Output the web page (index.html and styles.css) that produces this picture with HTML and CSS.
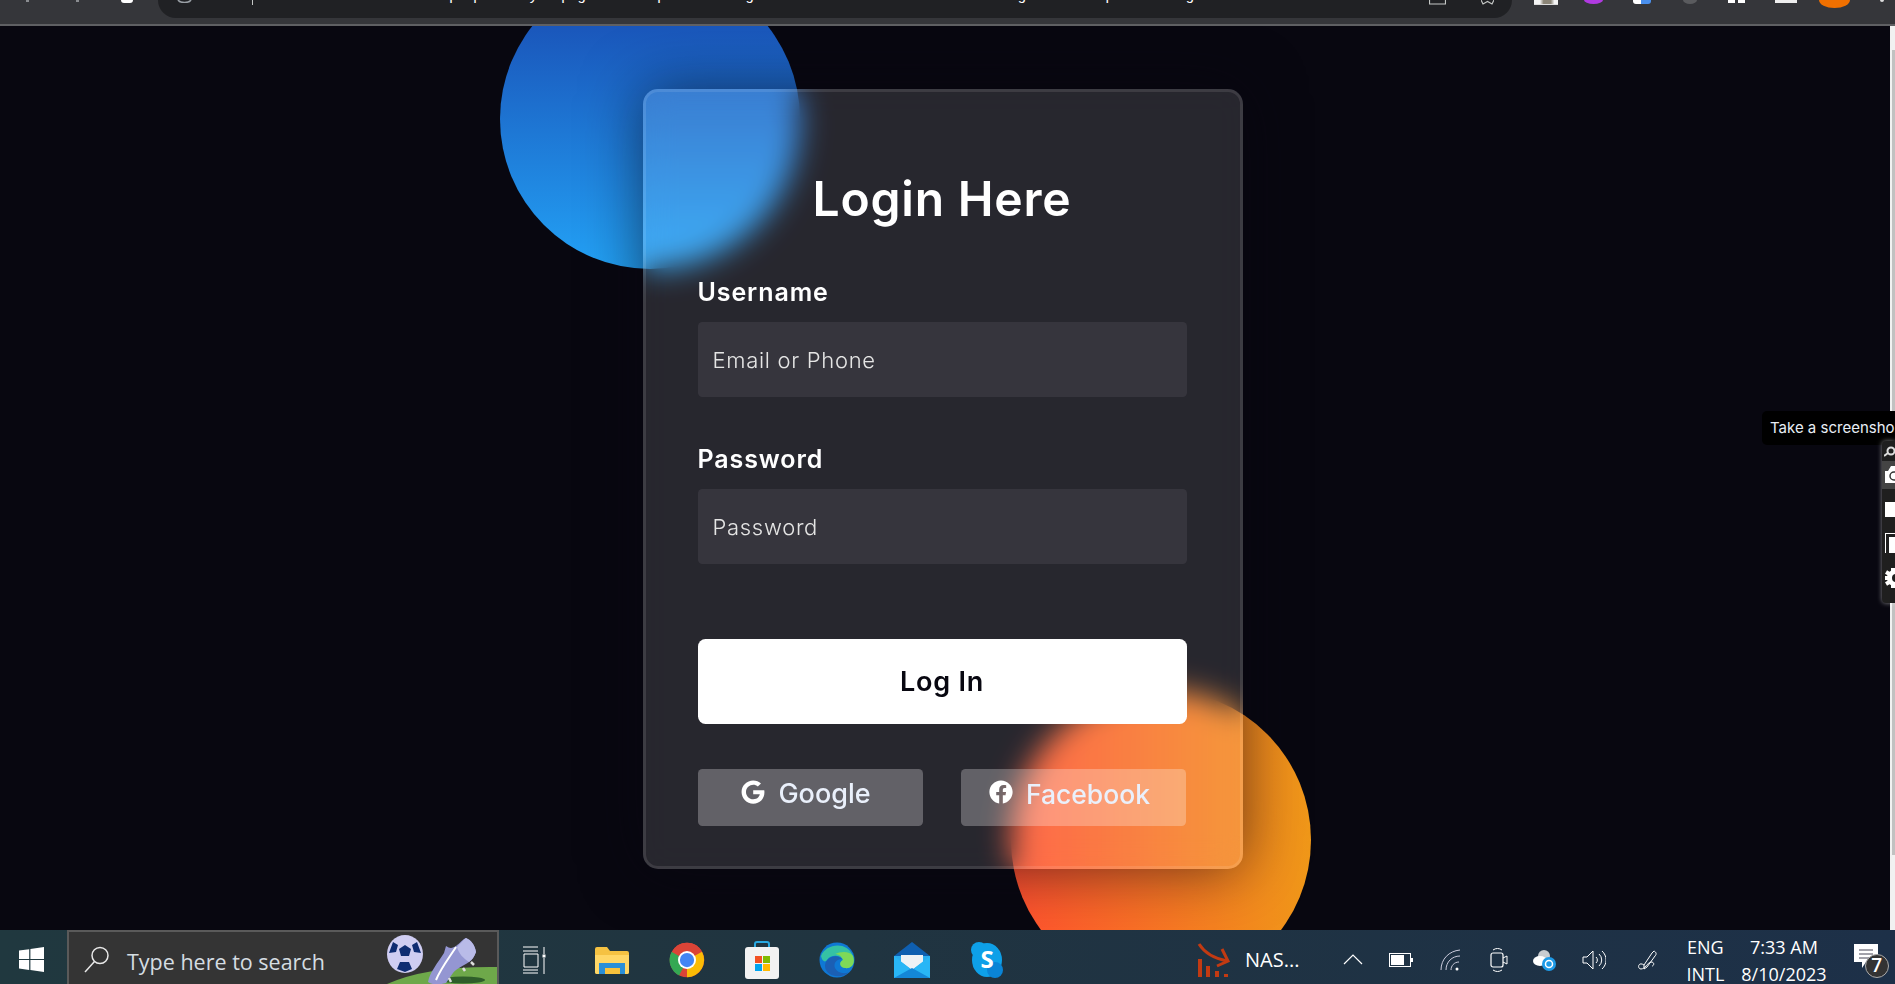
FILE: index.html
```html
<!DOCTYPE html>
<html lang="en">
<head>
<meta charset="utf-8">
<title>Login Here</title>
<link rel="stylesheet" href="styles.css">
</head>
<body>
<header class="chrome">
  <div class="nav-icons">
    <i class="nav-dot"></i>
    <i class="nav-dot"></i>
    <i class="nav-reload"></i>
  </div>
  <div class="omnibox">
    <svg class="omni-info" width="15" height="3" viewBox="0 0 15 3"><path d="M1 0a7 4 0 0 0 13 0" fill="none" stroke="#9aa0a6" stroke-width="1.500"/></svg>
    <span class="omni-sep"></span>
    <span class="url">127.0.0.1:/home/onDesktop/uploadsby/Inpage%20form-panel-%20login%20and%20the%20blurred%20forms/glass-form-panel%20login.html</span>
    <svg class="omni-share" width="17" height="5" viewBox="0 0 17 5"><path d="M.5 0v4h16V0" fill="none" stroke="#c4c7c5" stroke-width="1.200"/></svg>
    <svg class="omni-star" width="13" height="5" viewBox="0 0 13 5"><path d="M0 0 2 4 6.500 1.500 11 4 13 0" fill="none" stroke="#c4c7c5" stroke-width="1.200"/></svg>
  </div>
  <div class="ext-icons">
    <i class="ext ext-white"></i>
    <i class="ext ext-purple"></i>
    <i class="ext ext-blue"></i>
    <i class="ext ext-grey"></i>
    <i class="ext ext-puzzle"></i>
    <i class="ext ext-bar"></i>
    <i class="ext ext-avatar"></i>
    <i class="ext ext-dots"></i>
  </div>
</header>

<main class="stage">
  <div class="orb orb-blue"></div>
  <div class="orb orb-orange"></div>
  <form class="login">
    <h3 class="login-title">Login Here</h3>
    <label class="field-label" for="username">Username</label>
    <input class="field" id="username" type="text" placeholder="Email or Phone">
    <label class="field-label" for="password">Password</label>
    <input class="field" id="password" type="password" placeholder="Password">
    <button class="submit" type="button">Log In</button>
    <div class="social">
      <div class="social-btn">
        <svg class="social-icon" viewBox="0 0 488 512"><path fill="#fff" d="M488 261.8C488 403.3 391.1 504 248 504 110.8 504 0 393.2 0 256S110.8 8 248 8c66.8 0 123 24.5 166.3 64.9l-67.5 64.9C258.5 52.6 94.3 116.6 94.3 256c0 86.5 69.1 156.6 153.7 156.6 98.2 0 135-70.4 140.8-106.9H248v-85.3h236.1c2.3 12.7 3.9 24.9 3.9 41.4z"/></svg>
        <span>Google</span>
      </div>
      <div class="social-btn">
        <svg class="social-icon" viewBox="0 0 512 512"><path fill="#fff" d="M504 256C504 119 393 8 256 8S8 119 8 256c0 123.78 90.69 226.38 209.25 245V327.69h-63V256h63v-54.64c0-62.15 37-96.48 93.67-96.48 27.14 0 55.52 4.84 55.52 4.84v61h-31.28c-30.8 0-40.41 19.12-40.41 38.73V256h68.78l-11 71.69h-57.78V501C413.31 482.38 504 379.78 504 256z"/></svg>
        <span class="social-fb">Facebook</span>
      </div>
    </div>
  </form>

  <div class="scrollbar"><div class="scroll-thumb"></div></div>
  <div class="shot-tip">Take a screensho</div>
  <div class="shot-bar">
    <svg class="shot-mini" width="12" height="11" viewBox="0 0 12 11"><circle cx="7" cy="5" r="3.500" fill="none" stroke="#ddd" stroke-width="2"/><path d="M0 10 4 7" stroke="#ddd" stroke-width="2"/></svg>
    <div class="shot-item shot-active"><svg width="10" height="17" viewBox="0 0 10 17"><path d="M0 5h3l3-5h4v17H0z" fill="#fff"/><circle cx="9" cy="10" r="4" fill="none" stroke="#333" stroke-width="1.500"/></svg></div>
    <div class="shot-item shot-sq"><i class="shot-square"></i></div>
    <div class="shot-item shot-cp"><i class="shot-copy"></i></div>
    <div class="shot-item"><svg width="10" height="20" viewBox="0 0 10 20"><circle cx="11" cy="10" r="6.500" fill="none" stroke="#fff" stroke-width="5"/><path d="M1 4 6 7M0 10h5M1 16l5-3M8 0v4M8 16v4" stroke="#fff" stroke-width="4"/></svg></div>
  </div>
</main>

<footer class="taskbar">
  <div class="start">
    <svg width="25" height="25" viewBox="0 0 25 25"><path fill="#fff" d="M0 3.600 10.200 2.200v9.700H0zM11.400 2 25 0v11.900H11.400zM0 13.100h10.200v9.800L0 21.500zM11.400 13.100H25V25l-13.600-2z"/></svg>
  </div>
  <div class="search">
    <svg class="search-icon" width="26" height="29" viewBox="0 0 26 29"><circle cx="16" cy="10.500" r="8" fill="none" stroke="#e8e8e8" stroke-width="1.500"/><path d="M10.500 16.500 1 27" stroke="#e8e8e8" stroke-width="1.500"/></svg>
    <span class="search-text">Type here to search</span>
    <svg class="search-art" width="110" height="52" viewBox="0 2 110 52">
      <path d="M0 54Q40 36 110 37V54z" fill="#6ea84a"/>
      <ellipse cx="76" cy="50" rx="22" ry="3.500" fill="#2f5e2a"/>
      <ellipse cx="18" cy="24" rx="18" ry="19" fill="#cfcdf2"/>
      <path d="M18 15l6 4-2 7h-8l-2-7zM6 12l5 3-2 7-7 1zM30 12l-5 3 2 7 7 1zM10 39l3-7 9 0 3 7-7 3z" fill="#0e2c72"/>
      <path d="M41 52C43 42 50 34 57 23L59 16C63 19 66 18 69 16 73 13 76 9 79 8 84 10 88 15 89 22 87 27 85 30 82 32 76 36 70 38 66 43L59 53C52 55 45 55 41 52z" fill="#9496d2"/>
      <path d="M70 17C73 14 76 10 79 8 84 10 88 15 89 22 87 27 85 30 82 32 76 28 72 24 70 17z" fill="#b9bbe8"/>
      <path d="M49 50C54 38 62 28 69 17" fill="none" stroke="#fff" stroke-width="2"/>
      <path d="M84 32l3 3M76 38l2 3M62 48l2 4" stroke="#ddd" stroke-width="2.500"/>
    </svg>
  </div>
  <div class="task-apps">
    <span class="app app-view">
      <svg width="24" height="28" viewBox="0 0 24 28"><path d="M0 1h15M0 5h15M1 8h14v13H1zM0 24h15M0 27h15M21 1v7M21 12v16" fill="none" stroke="#fff" stroke-width="1"/><rect x="19.500" y="8.500" width="3" height="3" fill="#fff"/></svg>
    </span>
    <span class="app">
      <svg width="34" height="28" viewBox="0 0 34 28"><path d="M0 3a2 2 0 0 1 2-2h10l3 4h17a2 2 0 0 1 2 2v19a2 2 0 0 1-2 2H2a2 2 0 0 1-2-2z" fill="#f5c242"/><path d="M0 9h34v17a2 2 0 0 1-2 2H2a2 2 0 0 1-2-2z" fill="#ffd766"/><path d="M4 28V17h26v11h-5v-6H10v6z" fill="#2a8fd8"/><rect x="10" y="22" width="15" height="6" fill="#f9c23c"/></svg>
    </span>
    <span class="app">
      <svg width="36" height="36" viewBox="0 0 48 48"><circle cx="24" cy="24" r="23" fill="#db4437"/><path d="M24 24 44 13A23 23 0 0 1 24 47z" fill="#fbbc05"/><path d="M24 24 13.500 44.500A23 23 0 0 1 3.500 13z" fill="#34a853"/><path d="M24 1a23 23 0 0 1 20 12H24a11 11 0 0 0-10 6L4 13A23 23 0 0 1 24 1z" fill="#db4437"/><circle cx="24" cy="24" r="12" fill="#fff"/><circle cx="24" cy="24" r="9.500" fill="#4285f4"/></svg>
    </span>
    <span class="app">
      <svg width="36" height="38" viewBox="0 0 36 38"><path d="M11 10V3a2 2 0 0 1 2-2h10a2 2 0 0 1 2 2v7" fill="none" stroke="#29a8e0" stroke-width="2"/><rect x="1" y="6" width="34" height="32" rx="3" fill="#f2f2f2"/><rect x="11" y="15" width="7" height="7" fill="#f25022"/><rect x="19" y="15" width="7" height="7" fill="#7fba00"/><rect x="11" y="23" width="7" height="7" fill="#00a4ef"/><rect x="19" y="23" width="7" height="7" fill="#ffb900"/></svg>
    </span>
    <span class="app">
      <svg width="36" height="36" viewBox="0 0 36 36"><circle cx="18" cy="18" r="17.500" fill="#0f78d4"/><path d="M2 14C6 2 28-2 34 14c3 9-3 13-8 12C20 25 20 20 24 18 22 13 12 12 8 18 6 21 3 19 2 14z" fill="#35c1a4"/><path d="M6 24C6 15 18 11 23 17c-5 0-9 4-7 9 2 4 8 7 14 4-8 8-24 4-24-6z" fill="#1b5fb4"/><path d="M34 14c3 9-3 13-8 12-6-1-6-6-2-8-1-4-5-6-8-6 6-3 15-3 18 2z" fill="#7ed957"/></svg>
    </span>
    <span class="app">
      <svg width="36" height="36" viewBox="0 0 36 36"><path d="M0 14 18 0l18 14v22H0z" fill="#0f5fb0"/><path d="M0 14h36v22H0z" fill="#2aaef0"/><path d="M7 13h22v7l-11 8-11-8z" fill="#eef2f5"/><path d="M0 14l18 14 18-14v22H0z" fill="#29b6f6"/><path d="M0 36l18-10 18 10z" fill="#1487d8"/></svg>
    </span>
    <span class="app">
      <svg width="34" height="38" viewBox="0 0 34 38"><ellipse cx="17" cy="19" rx="15" ry="17" fill="#0ea0e8"/><circle cx="9" cy="9" r="8" fill="#0ea0e8"/><circle cx="25" cy="29" r="8" fill="#0a84d6"/><text class="skype-s" x="17" y="27">S</text></svg>
    </span>
  </div>
  <div class="stock">
    <svg width="34" height="34" viewBox="0 0 34 34"><path d="M2 1C7 9 15 15 30 18" fill="none" stroke="#c23a12" stroke-width="3"/><path d="M25 6 31 18 20 23" fill="none" stroke="#c23a12" stroke-width="3"/><path d="M3 16v18M11 23v11M20 28v6M29 31v3" stroke="#c23a12" stroke-width="4"/></svg>
    <span class="stock-text">NAS...</span>
  </div>
  <div class="tray">
    <svg class="tray-chev" width="20" height="11" viewBox="0 0 20 11"><path d="M1 10 10 1l9 9" fill="none" stroke="#fff" stroke-width="1.200"/></svg>
    <svg class="tray-batt" width="24" height="14" viewBox="0 0 24 14"><rect x=".5" y=".5" width="21" height="13" fill="none" stroke="#fff"/><rect x="2" y="2" width="13" height="10" fill="#fff"/><rect x="22" y="5" width="2" height="4" fill="#fff"/></svg>
    <svg class="tray-wifi" width="22" height="22" viewBox="0 0 22 22"><path d="M1 21C1 10 9 2 20 1M6 21c0-8 6-14 14-14M11 21c0-4 3-8 8-8" fill="none" stroke="#ccd" stroke-width="1"/><circle cx="17" cy="20" r="1.500" fill="#fff"/></svg>
    <svg class="tray-cam" width="18" height="24" viewBox="0 0 18 24"><path d="M3 2a8 8 0 0 1 9 0M3 22a8 8 0 0 0 9 0" fill="none" stroke="#fff"/><rect x="1" y="5" width="12" height="14" rx="2" fill="none" stroke="#fff" stroke-width="1.200"/><path d="M13 10l4-2v8l-4-2" fill="none" stroke="#fff"/></svg>
    <svg class="tray-cloud" width="24" height="22" viewBox="0 0 24 22"><circle cx="11" cy="7" r="6" fill="#c9ccd0"/><ellipse cx="7" cy="12" rx="7" ry="5" fill="#fff"/><circle cx="16" cy="15" r="7" fill="#1e9be8"/><circle cx="16" cy="15" r="3.500" fill="none" stroke="#fff" stroke-width="1.500"/></svg>
    <svg class="tray-vol" width="24" height="20" viewBox="0 0 24 20"><path d="M1 7h4l6-6v18l-6-6H1z" fill="none" stroke="#fff"/><path d="M14 7a4 4 0 0 1 0 6M17 4a8 8 0 0 1 0 12M20 1a12 12 0 0 1 0 18" fill="none" stroke="#fff"/></svg>
    <svg class="tray-pen" width="22" height="22" viewBox="0 0 22 22"><path d="M18 2c2 1 3 3 1 5l-8 11-3 2 0-4 8-12zM8 16C2 12 1 20 5 20s6-6 10-7c4 0 3 4 1 4" fill="none" stroke="#fff"/></svg>
    <div class="tray-lang"><span>ENG</span><span>INTL</span></div>
    <div class="tray-clock"><span>7:33 AM</span><span>8/10/2023</span></div>
    <div class="notif">
      <svg width="24" height="26" viewBox="0 0 24 26"><path d="M0 0h24v18H12l-4 6v-6H0z" fill="#fff"/><path d="M5 6h14M5 10h14M5 14h10" stroke="#445" stroke-width="1"/></svg>
      <span class="notif-badge">7</span>
    </div>
  </div>
</footer>
</body>
</html>
```
FILE: styles.css
```css
* { box-sizing: border-box; }
html, body { margin: 0; height: 100%; }
body {
  width: 1895px;
  height: 984px;
  display: flex;
  flex-direction: column;
  overflow: hidden;
  background: #080710;
  font-family: Inter, "Liberation Sans", sans-serif;
}

/* browser chrome */
.chrome {
  height: 26px;
  flex: none;
  display: flex;
  background: #35363a;
  border-bottom: 2px solid #5f6063;
}
.nav-icons {
  width: 158px;
  flex: none;
  display: flex;
  align-items: flex-start;
  padding-left: 26px;
}
.nav-dot {
  width: 3px;
  height: 2px;
  margin-right: 47px;
  background: #8a8c90;
  flex: none;
}
.nav-reload {
  width: 12px;
  height: 3px;
  margin-left: -5px;
  background: #fff;
  border-radius: 0 0 6px 6px;
  flex: none;
}
.omnibox {
  width: 1354px;
  height: 18px;
  flex: none;
  display: flex;
  align-items: flex-start;
  overflow: hidden;
  background: #202124;
  border-radius: 0 0 18px 18px;
}
.omni-info { margin-left: 19px; flex: none; }
.omni-sep { width: 1px; height: 5px; margin-left: 60px; background: #c4c7c5; flex: none; }
.url {
  flex: none;
  width: 1172px;
  margin: -11px 0 0 4px;
  overflow: hidden;
  font: 15px/16px "Liberation Mono", monospace;
  letter-spacing: -1px;
  color: #fff;
  white-space: nowrap;
}
.omni-share { margin-right: 35px; flex: none; }
.omni-star { flex: none; }
.ext-icons {
  flex: 1;
  display: flex;
  align-items: flex-start;
  padding-left: 22px;
}
.ext { display: block; flex: none; }
.ext-white { width: 24px; height: 5px; background: linear-gradient(90deg, #f4f4f4 25%, #8b8577 40% 70%, #f4f4f4 85%); border-bottom: 1px solid #ddd; }
.ext-purple { width: 19px; height: 4px; margin-left: 26px; background: #b03ae0; border-radius: 0 0 50% 50% / 0 0 100% 100%; }
.ext-blue { width: 18px; height: 4px; margin-left: 30px; background: linear-gradient(90deg, #fff 45%, #4a90ee 45%); border-radius: 0 0 3px 3px; }
.ext-grey { width: 14px; height: 4px; margin-left: 32px; background: #5a5b5e; border-radius: 0 0 50% 50% / 0 0 100% 100%; }
.ext-puzzle { width: 17px; height: 3px; margin-left: 31px; background: linear-gradient(90deg, #fff 40%, transparent 40% 60%, #fff 60%); }
.ext-bar { width: 22px; height: 3px; margin-left: 30px; background: #eee; }
.ext-avatar { width: 31px; height: 8px; margin-left: 22px; background: #f07000; border-radius: 0 0 50% 50% / 0 0 100% 100%; }
.ext-dots { width: 4px; height: 2px; margin-left: 30px; background: #ddd; border-radius: 0 0 2px 2px; }

/* stage */
.stage {
  flex: 1;
  min-height: 0;
  position: relative;
  overflow: hidden;
  padding: 63px 0 0 643px;
}
.orb {
  position: absolute;
  width: 300px;
  height: 300px;
  border-radius: 50%;
}
.orb-blue {
  left: 500px;
  top: -57px;
  background: linear-gradient(#1845ad, #23a2f6);
}
.orb-orange {
  left: 1011px;
  top: 664px;
  background: linear-gradient(to right, #ff512f, #f09819);
}
.login {
  position: relative;
  width: 600px;
  height: 780px;
  padding: 75px 53.500px 75px 51.500px;
  background: rgba(255, 255, 255, 0.13);
  backdrop-filter: blur(15px);
  border: 3px solid rgba(255, 255, 255, 0.1);
  border-radius: 15px;
  box-shadow: 0 0 60px rgba(8, 7, 16, 0.6);
  color: #fff;
}
.login-title {
  margin: 0;
  font-size: 48px;
  font-weight: 600;
  letter-spacing: 0.8px;
  line-height: 63px;
  text-align: center;
}
.field-label {
  display: block;
  margin-top: 45px;
  font-size: 25px;
  font-weight: 600;
  letter-spacing: 0.900px;
  line-height: 35px;
}
.field {
  display: block;
  width: 100%;
  height: 75px;
  margin-top: 12px;
  padding: 0 15px;
  border: 0;
  border-radius: 4.500px;
  background: rgba(255, 255, 255, 0.07);
  color: #e5e5e5;
  font: 300 22px Inter, sans-serif;
  letter-spacing: 0.700px;
}
.field::placeholder { color: #e5e5e5; opacity: 1; }
.submit {
  display: block;
  width: 100%;
  height: 85px;
  margin-top: 75px;
  border: 0;
  border-radius: 7.500px;
  background: #fff;
  color: #080710;
  font: 600 27px Inter, sans-serif;
  letter-spacing: 0.800px;
}
.social {
  display: flex;
  gap: 38.500px;
  margin-top: 45px;
}
.social-btn {
  width: 225px;
  height: 57px;
  display: flex;
  justify-content: center;
  align-items: flex-start;
  gap: 13px;
  padding: 5px 8px 0 0;
  border-radius: 4.500px;
  background: rgba(255, 255, 255, 0.27);
  color: #eaf0fb;
  font-size: 27px;
  font-weight: 500;
  line-height: 40px;
}
.social-fb { font-size: 26.500px; }
.social-icon { width: 24px; height: 24px; margin-top: 6px; flex: none; }

/* page scrollbar */
.scrollbar {
  position: absolute;
  top: 0;
  right: 0;
  bottom: 0;
  width: 5px;
  padding: 24px 0 75px 1.500px;
  background: #f1f1f1;
}
.scroll-thumb { height: 100%; background: #c1c1c1; }

/* screenshot extension */
.shot-tip {
  position: absolute;
  left: 1762px;
  top: 385px;
  width: 133px;
  height: 34px;
  padding-left: 8px;
  overflow: hidden;
  background: #000;
  border-radius: 5px 0 0 5px;
  color: #e8eef5;
  font-size: 15px;
  line-height: 33px;
  white-space: nowrap;
}
.shot-bar {
  position: absolute;
  left: 1882px;
  top: 415px;
  width: 13px;
  height: 162px;
  display: flex;
  flex-direction: column;
  overflow: hidden;
  background: #1f1f1f;
  border-radius: 4px 0 0 4px;
  box-shadow: 0 0 5px rgba(255, 255, 255, 0.5);
}
.shot-mini { margin: 5px 0 4px 2px; flex: none; }
.shot-item { height: 28px; margin-bottom: 6px; padding: 5px 0 0 3px; flex: none; }
.shot-active { background: #444; }
.shot-sq { padding-top: 7px; }
.shot-cp { padding-top: 4px; }
.shot-square { display: block; width: 10px; height: 15px; background: #fff; }
.shot-copy { display: block; width: 10px; height: 20px; border-left: 1.500px solid #fff; border-top: 1.500px solid #fff; background: linear-gradient(#fff, #fff) 3px 3px no-repeat; }

/* windows taskbar */
.taskbar {
  height: 54px;
  flex: none;
  display: flex;
  align-items: center;
  padding-top: 5px;
  background: linear-gradient(90deg, #20383f, #203440 45%, #1d3048);
  color: #fff;
  font-family: "Open Sans", sans-serif;
}
.start {
  width: 67px;
  flex: none;
  padding-left: 19px;
  display: flex;
}
.search {
  width: 432px;
  height: 54px;
  flex: none;
  position: relative;
  align-self: flex-start;
  margin-top: -5px;
  display: flex;
  align-items: center;
  padding: 6px 0 0 15px;
  background: #343434;
  border: 2px solid #5a5a5a;
  border-bottom: 0;
}
.search-icon { flex: none; margin-top: -3px; }
.search-text {
  margin-left: 17px;
  font-size: 21.500px;
  color: #d5dde2;
}
.search-art {
  position: absolute;
  right: 0;
  bottom: 0;
}
.task-apps {
  display: flex;
  align-items: center;
  margin-left: 24px;
}
.app {
  width: 75px;
  display: flex;
  justify-content: center;
}
.app-view { width: 24px; margin-right: 27px; }
.skype-s { fill: #fff; font: 700 24px "Open Sans", sans-serif; text-anchor: middle; }
.stock {
  display: flex;
  align-items: center;
  margin-left: 173px;
  gap: 14px;
}
.stock-text { font-size: 20px; }
.tray {
  display: flex;
  align-items: center;
  margin-left: 44px;
}
.tray-chev { margin-right: 26px; }
.tray-batt { margin-right: 27px; }
.tray-wifi { margin-right: 28px; }
.tray-cam { margin-right: 25px; }
.tray-cloud { margin-right: 25px; }
.tray-vol { margin-right: 30px; }
.tray-pen { margin-right: 28px; }
.tray-lang, .tray-clock {
  display: flex;
  flex-direction: column;
  align-items: center;
  margin-top: 2px;
  font-size: 18px;
  line-height: 27px;
}
.tray-clock { margin-left: 17px; }
.notif {
  position: relative;
  margin-left: 27px;
  height: 40px;
  padding-top: 4px;
}
.notif-badge {
  position: absolute;
  left: 11px;
  top: 14px;
  width: 24px;
  height: 24px;
  border-radius: 50%;
  background: #333;
  border: 1.500px solid #aaa;
  text-align: center;
  font-size: 19px;
  font-weight: 600;
  line-height: 21px;
}
```
